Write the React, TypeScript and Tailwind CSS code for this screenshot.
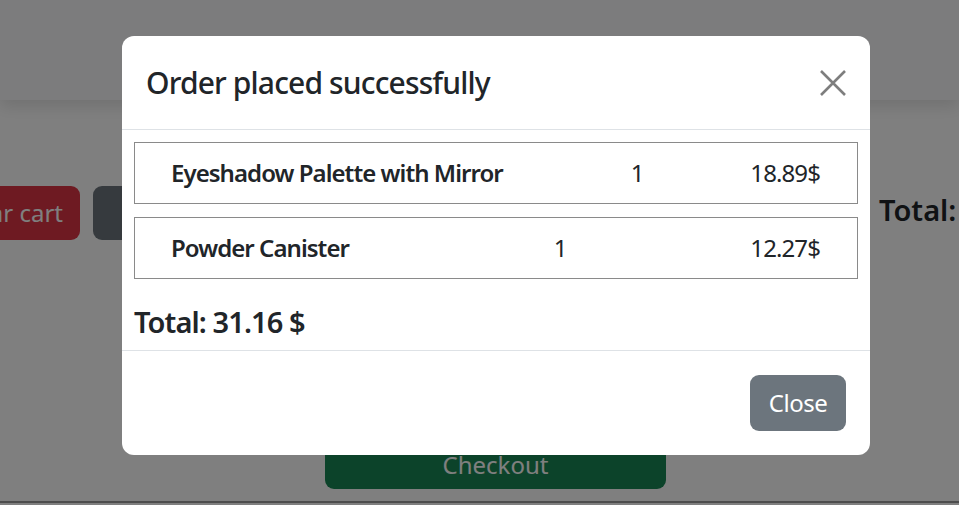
import React from 'react';

const items = [
    { name: 'Eyeshadow Palette with Mirror', qty: 1, price: '18.89$' },
    { name: 'Powder Canister', qty: 1, price: '12.27$' },
];

export default function App() {
    return (
        <div className="relative h-[505px] w-[959px] overflow-hidden bg-white text-[#212529] font-['Noto_Sans',sans-serif]">
            {/* Page behind the modal */}
            <nav className="h-[100px] bg-[#f8f9fa] shadow-[0_6px_16px_rgba(0,0,0,0.12)]" />
            <div className="flex items-center pt-[86px]">
                <button className="ml-[-62px] h-[54px] w-[142px] rounded-[9px] bg-[#dc3545] text-[24px] text-white">
                    Clear cart
                </button>
                <button className="ml-[13px] h-[54px] w-[120px] rounded-[9px] bg-[#6c757d] text-[24px] text-white">
                    Close
                </button>
                <h5 className="ml-auto mr-[-60px] w-[140px] pb-[6px] text-[29px] font-semibold">Total:</h5>
            </div>
            <div className="flex justify-center pt-[200px]">
                <button className="ml-[32px] h-[49px] w-[341px] rounded-[9px] bg-[#198754] text-[24px] text-white">
                    Checkout
                </button>
            </div>
            <div className="mt-[12px] h-[2px] bg-[#9a9a9a]" />

            {/* Backdrop */}
            <div className="fixed inset-0 bg-black/50" />

            {/* Modal */}
            <div className="fixed left-[122px] top-[36px] w-[748px] rounded-[12px] bg-white">
                <div className="flex h-[94px] items-center justify-between border-b border-[#dee2e6] px-[24px]">
                    <h5 className="text-[30px] font-medium tracking-[-0.85px]">Order placed successfully</h5>
                    <button className="mr-[-2px] flex h-[30px] w-[30px] items-center justify-center opacity-50">
                        <svg width="26" height="26" viewBox="0 0 26 26" stroke="#000" strokeWidth="2.6">
                            <path d="M1 1L25 25M25 1L1 25" />
                        </svg>
                    </button>
                </div>
                <div className="flex flex-col gap-[13px] px-[12px] pt-[12px]">
                    {items.map((item) => (
                        <div
                            key={item.name}
                            className="flex h-[62px] items-center border border-[#8a8a8a] pl-[36px] pr-[37px] text-[24px]"
                        >
                            <span className="font-semibold tracking-[-0.95px]">{item.name}</span>
                            <span className="flex-1 pl-[22px] text-center">{item.qty}</span>
                            <span className="tracking-[-0.9px]">{item.price}</span>
                        </div>
                    ))}
                    <h5 className="pb-[10px] pt-[13px] text-[29px] font-semibold leading-[1.2] tracking-[-0.9px]">
                        Total: 31.16 $
                    </h5>
                </div>
                <div className="flex justify-end border-t border-[#dee2e6] p-[24px]">
                    <button className="h-[56px] w-[96px] rounded-[9px] bg-[#6c757d] text-[24px] tracking-[-0.5px] text-white">
                        Close
                    </button>
                </div>
            </div>
        </div>
    );
}
